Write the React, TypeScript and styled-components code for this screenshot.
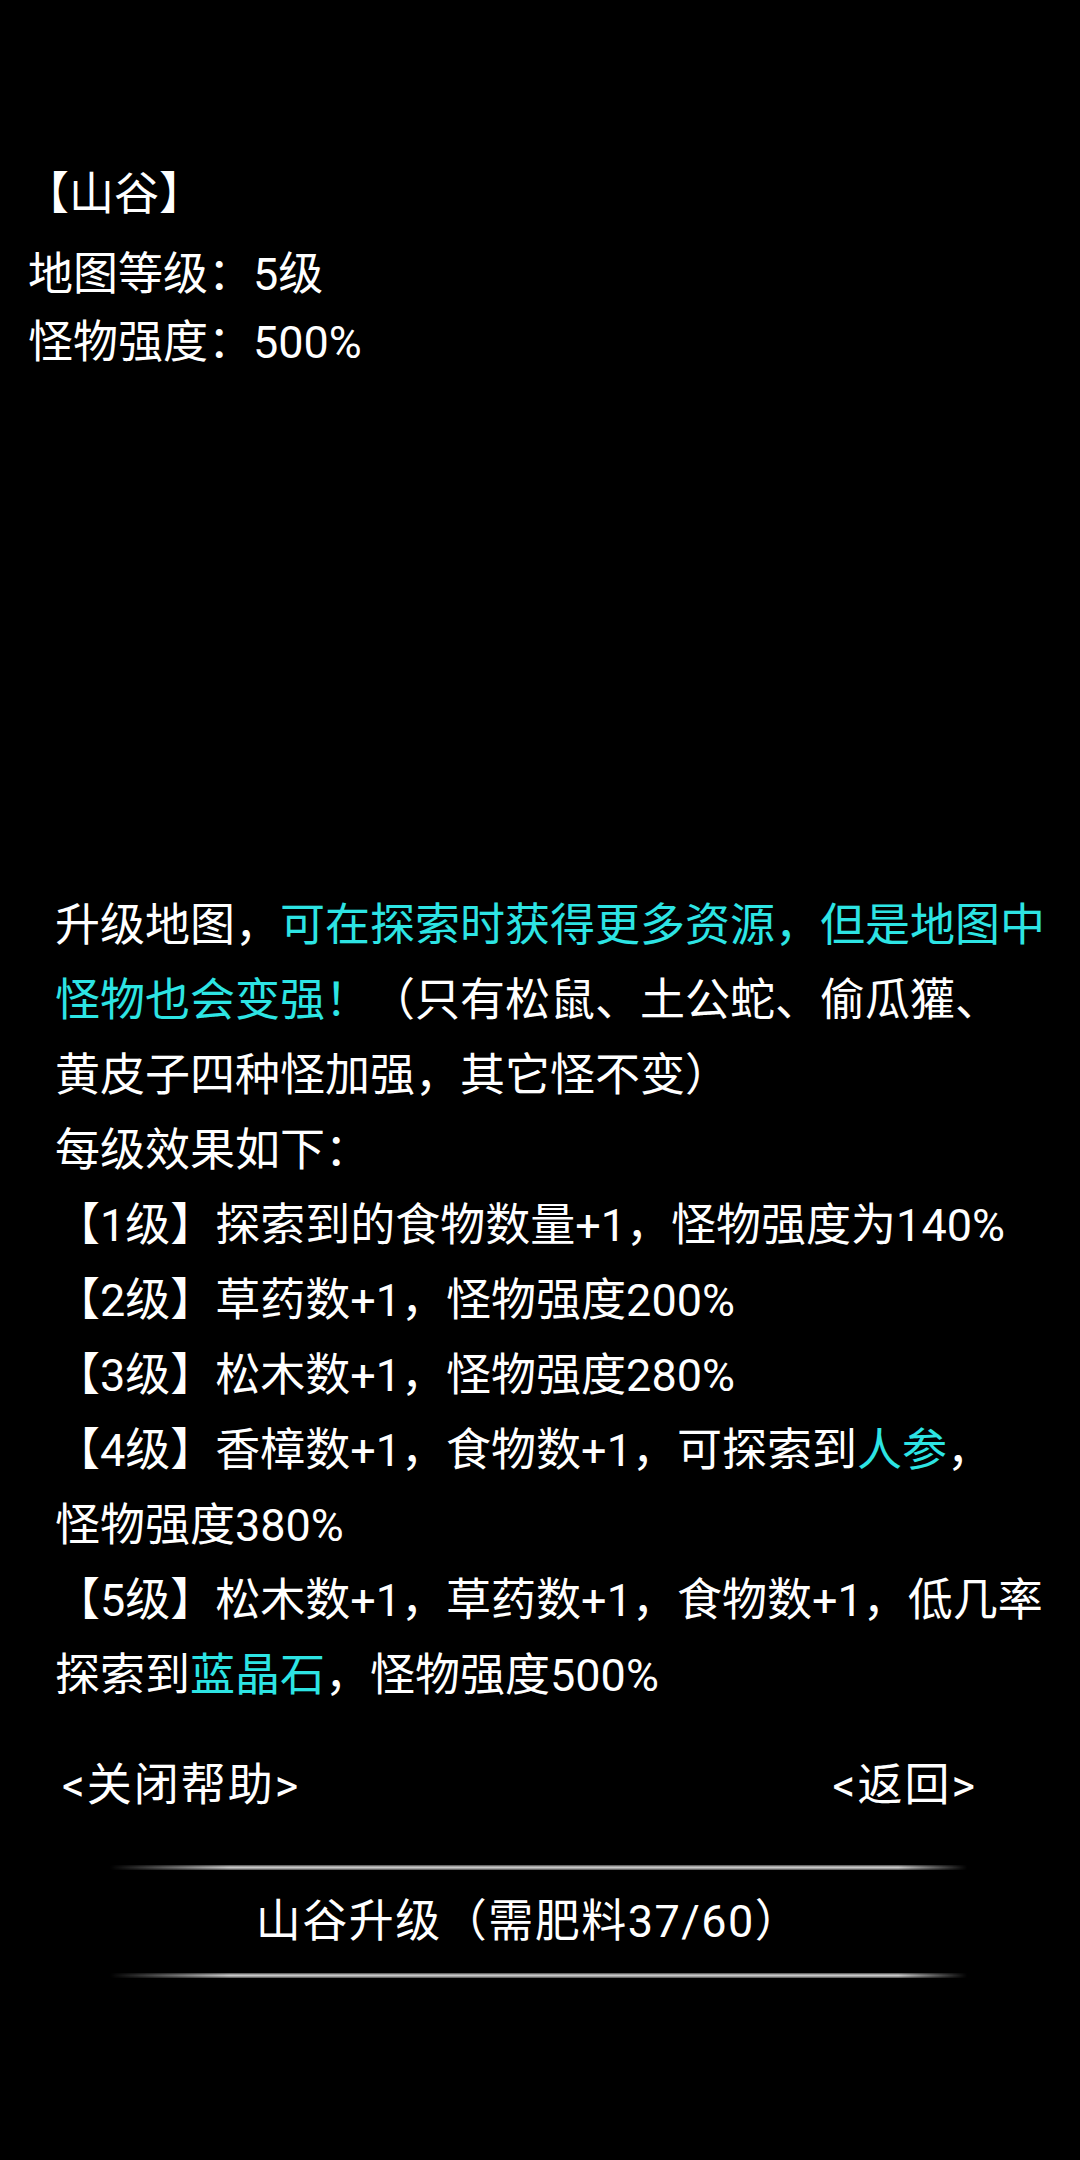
import React from "react";
import styled, { createGlobalStyle } from "styled-components";

const GlobalStyle = createGlobalStyle`
  html, body {
    margin: 0;
    padding: 0;
    background: #000;
  }
  body {
    font-family: Roboto, "Noto Sans CJK SC", "Noto Sans", sans-serif;
    color: #fff;
  }
`;

const Screen = styled.div`
  width: 1080px;
  min-height: 2160px;
  background: #000;
  display: flex;
  flex-direction: column;
  font-size: 45px;
  color: #fff;
`;

const Header = styled.section`
  display: flex;
  flex-direction: column;
  padding-top: 161px;
`;

const Title = styled.div`
  line-height: 68px;
  padding-left: 24px;
  margin-bottom: 12px;
  white-space: nowrap;
`;

const InfoRow = styled.div`
  line-height: 68px;
  padding-left: 28px;
  white-space: nowrap;
`;

const HelpText = styled.section`
  display: flex;
  flex-direction: column;
  margin-top: 511px;
  padding-left: 55px;
`;

const HelpLine = styled.div`
  line-height: 75px;
  white-space: nowrap;
`;

const Hi = styled.span`
  color: #2de4e4;
`;

const LinkRow = styled.nav`
  display: flex;
  justify-content: space-between;
  align-items: center;
  margin-top: 39px;
  padding: 0 103px 0 62px;
  line-height: 68px;
`;

const LinkButton = styled.span`
  white-space: nowrap;
  letter-spacing: 2px;
  cursor: pointer;
`;

const UpgradeBlock = styled.section`
  display: flex;
  flex-direction: column;
  margin: 45px 0 0 110px;
  width: 857px;
`;

const Divider = styled.div`
  height: 5px;
  background: linear-gradient(to bottom, #4a4a4a 0%, #cfcfcf 45%, #bdbdbd 60%, #4a4a4a 100%);
  -webkit-mask-image: linear-gradient(to right, transparent 0%, #000 14%, #000 92%, transparent 100%);
  mask-image: linear-gradient(to right, transparent 0%, #000 14%, #000 92%, transparent 100%);
`;

const UpgradeButton = styled.div`
  height: 103px;
  line-height: 103px;
  text-align: center;
  padding-right: 20px;
  letter-spacing: 1.5px;
  white-space: nowrap;
  cursor: pointer;
`;

export default function App() {
  return (
    <>
      <GlobalStyle />
      <Screen>
        <Header>
          <Title>【山谷】</Title>
          <InfoRow>地图等级：5级</InfoRow>
          <InfoRow>怪物强度：500%</InfoRow>
        </Header>

        <HelpText>
          <HelpLine>
            升级地图，<Hi>可在探索时获得更多资源，但是地图中</Hi>
          </HelpLine>
          <HelpLine>
            <Hi>怪物也会变强！</Hi>（只有松鼠、土公蛇、偷瓜獾、
          </HelpLine>
          <HelpLine>黄皮子四种怪加强，其它怪不变）</HelpLine>
          <HelpLine>每级效果如下：</HelpLine>
          <HelpLine>【1级】探索到的食物数量+1，怪物强度为140%</HelpLine>
          <HelpLine>【2级】草药数+1，怪物强度200%</HelpLine>
          <HelpLine>【3级】松木数+1，怪物强度280%</HelpLine>
          <HelpLine>
            【4级】香樟数+1，食物数+1，可探索到<Hi>人参</Hi>，
          </HelpLine>
          <HelpLine>怪物强度380%</HelpLine>
          <HelpLine>【5级】松木数+1，草药数+1，食物数+1，低几率</HelpLine>
          <HelpLine>
            探索到<Hi>蓝晶石</Hi>，怪物强度500%
          </HelpLine>
        </HelpText>

        <LinkRow>
          <LinkButton>&lt;关闭帮助&gt;</LinkButton>
          <LinkButton>&lt;返回&gt;</LinkButton>
        </LinkRow>

        <UpgradeBlock>
          <Divider />
          <UpgradeButton>山谷升级（需肥料37/60）</UpgradeButton>
          <Divider />
        </UpgradeBlock>
      </Screen>
    </>
  );
}
